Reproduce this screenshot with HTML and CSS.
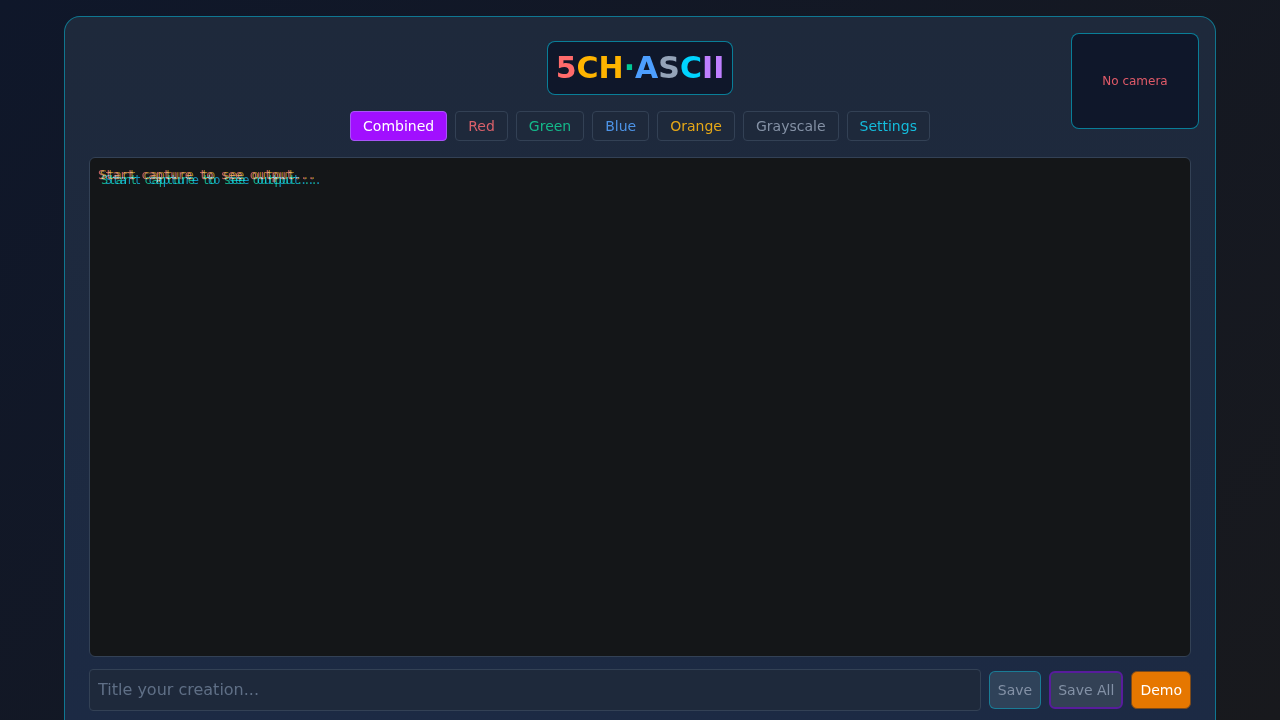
FILE: index.html
```html
<!DOCTYPE html>
<html lang="en">
<head>
    <meta charset="UTF-8">
    <meta name="viewport" content="width=device-width, initial-scale=1.0">
    <title>5CH ASCII</title>
    <link rel="stylesheet" href="styles.css">
</head>
<body>
    <div class="panel">
        <div class="camera">No camera</div>

        <div class="logo-row">
            <h1 class="logo"><span class="c-red">5</span><span class="c-amber">CH</span><span class="c-green">·</span><span class="c-blue">A</span><span class="c-gray">S</span><span class="c-cyan">C</span><span class="c-purple">II</span></h1>
        </div>

        <div class="tabs">
            <button class="tab tab-active">Combined</button>
            <button class="tab tab-red">Red</button>
            <button class="tab tab-green">Green</button>
            <button class="tab tab-blue">Blue</button>
            <button class="tab tab-amber">Orange</button>
            <button class="tab tab-gray">Grayscale</button>
            <button class="tab tab-cyan">Settings</button>
        </div>

        <div class="output">
            <pre class="layer layer-red">Start capture to see output...</pre>
            <pre class="layer layer-orange">Start capture to see output...</pre>
            <pre class="layer layer-gray">Start capture to see output...</pre>
            <pre class="layer layer-green">Start capture to see output...</pre>
            <pre class="layer layer-blue">Start capture to see output...</pre>
        </div>

        <div class="save-row">
            <input class="title-input" type="text" placeholder="Title your creation...">
            <button class="action action-save">Save</button>
            <button class="action action-all">Save All</button>
            <button class="action action-demo">Demo</button>
        </div>
    </div>
</body>
</html>
```

FILE: styles.css
```css
* {
    box-sizing: border-box;
}
html, body {
    height: 100%;
}
body {
    margin: 0;
    padding: 16px 16px 0;
    overflow: hidden;
    font-family: "DejaVu Sans", sans-serif;
    background: linear-gradient(135deg, #0f172a, #18191d);
}
.panel {
    position: relative;
    width: 1152px;
    margin: 0 auto;
    padding: 24px;
    background: linear-gradient(180deg, #1e293b, #1c2a44);
    border: 1px solid rgba(6, 182, 212, 0.55);
    border-radius: 16px;
}
.camera {
    position: absolute;
    top: 16px;
    right: 16px;
    width: 128px;
    height: 96px;
    display: flex;
    align-items: center;
    justify-content: center;
    font-size: 12px;
    color: #e05a68;
    background: #0f172a;
    border: 1px solid rgba(6, 182, 212, 0.65);
    border-radius: 8px;
}
.logo-row {
    display: flex;
    justify-content: center;
    margin-bottom: 16px;
}
.logo {
    margin: 0;
    padding: 8px;
    font-size: 30px;
    line-height: 36px;
    font-weight: 700;
    background: #0f172a;
    border: 1px solid rgba(6, 182, 212, 0.65);
    border-radius: 8px;
}
.c-red { color: #ff6b6b; }
.c-amber { color: #ffb400; }
.c-green { color: #00c896; }
.c-blue { color: #4d9fff; }
.c-gray { color: #94a3b8; }
.c-cyan { color: #00d4ff; }
.c-purple { color: #bf7fff; }

.tabs {
    display: flex;
    justify-content: center;
    gap: 8px;
    margin-bottom: 16px;
}
.tab {
    height: 30px;
    padding: 0 12px;
    font-family: inherit;
    font-size: 14px;
    background: #1e293b;
    border: 1px solid #334155;
    border-radius: 4px;
}
.tab-active {
    color: #fff;
    background: #a10fff;
    border-color: #a855f7;
}
.tab-red { color: #d9606a; }
.tab-green { color: #14b88a; }
.tab-blue { color: #4d93e6; }
.tab-amber { color: #e6a817; }
.tab-gray { color: #8491a5; }
.tab-cyan { color: #14bcdc; }

.output {
    position: relative;
    height: 500px;
    margin-bottom: 12px;
    background: #141618;
    border: 1px solid #334155;
    border-radius: 6px;
    overflow: hidden;
}
.layer {
    position: absolute;
    top: 8px;
    left: 8px;
    margin: 0;
    font-family: "DejaVu Sans Mono", monospace;
    font-size: 12px;
    line-height: 18px;
    mix-blend-mode: screen;
    opacity: 0.7;
}
.layer-red { color: #ff6b6b; }
.layer-orange { color: #ffb400; left: 10px; opacity: 0.6; }
.layer-gray { color: #94a3b8; left: 9px; top: 9px; opacity: 0.2; }
.layer-green { color: #00c896; left: 11px; top: 13px; opacity: 0.8; }
.layer-blue { color: #00a8e0; left: 15px; top: 13px; opacity: 0.8; }

.save-row {
    display: flex;
    align-items: center;
    gap: 8px;
}
.title-input {
    flex: 1;
    height: 42px;
    padding: 0 8px 2px;
    font-family: inherit;
    font-size: 16px;
    color: #e2e8f0;
    background: #1e293b;
    border: 1px solid #334155;
    border-radius: 4px;
}
.title-input::placeholder {
    color: #5f6f86;
}
.action {
    height: 38px;
    padding: 0 8px;
    font-family: inherit;
    font-size: 14px;
    border-radius: 6px;
}
.action-save {
    color: #8391a6;
    background: #2f4259;
    border: 1px solid rgba(6, 182, 212, 0.5);
}
.action-all {
    padding: 0 7px;
    color: #8391a6;
    background: #334155;
    border: 2px solid #581c9c;
}
.action-demo {
    color: #fff;
    background: #e67700;
    border: 1px solid #7c4a1a;
}
```
